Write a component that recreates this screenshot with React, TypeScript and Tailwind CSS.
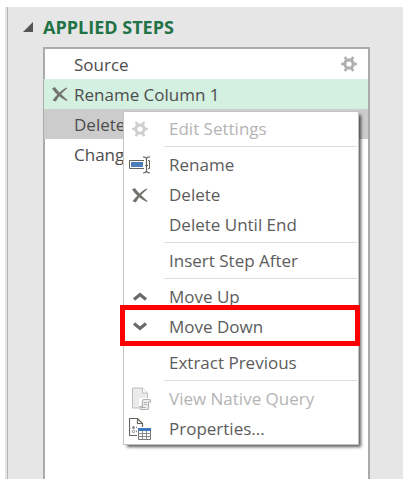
import type { ReactNode } from "react";

function GearIcon() {
  return (
    <svg width="16" height="16" viewBox="0 0 16 16" fill="none" stroke="currentColor" aria-hidden="true">
      <circle cx="8" cy="8" r="4.2" strokeWidth="3.2" />
      <path d="M0 8h4M12 8h4M3.800 .8l2 3.600M12.200 .8l-2 3.600M3.800 15.200l2-3.600M12.200 15.200l-2-3.600" strokeWidth="2.600" />
    </svg>
  );
}

function CrossIcon() {
  return (
    <svg width="16" height="15" viewBox="0 0 16 15" fill="#73736f" aria-hidden="true">
      <path d="M0 1.500 2.800 0C6 4.200 10.500 9 15.500 13l-.8 1C8.500 11 3.500 6.500 0 1.500Z" />
      <path d="M14.400.4l.9.9C11 4.500 7 9 3.800 14.500L.5 13.200C4 8.300 9 3.400 14.400.4Z" />
    </svg>
  );
}

function RenameIcon() {
  return (
    <svg width="22" height="18" viewBox="0 0 22 18" fill="none" stroke="#66665f" aria-hidden="true">
      <path d="M15 4.500H.5v8H15M19 4.500h1.500v8H19" />
      <path d="M2 6h12v5H2z" fill="#4a7ebb" stroke="none" />
      <path d="M14 .8c2 0 3 .6 3.400 1.700C17.800 1.400 19 .8 21 .8M14 17c2 0 3-.6 3.400-1.700.4 1.100 1.600 1.700 3.600 1.700M17.500 2v14M16 9.500h3" strokeWidth="1.200" />
    </svg>
  );
}

function ChevronIcon({ down = false }: { down?: boolean }) {
  return (
    <svg width="14" height="10" viewBox="0 0 14 10" fill="none" stroke="#6a6a6a" strokeWidth="3.200" aria-hidden="true">
      <path d={down ? "M1 1.500l6 5 6-5" : "M1 7.500l6-5 6 5"} />
    </svg>
  );
}

function NativeQueryIcon() {
  return (
    <svg width="22" height="24" viewBox="0 0 22 24" aria-hidden="true">
      <path d="M3.500 1h10l5 5v15h-15z" fill="#ebebeb" stroke="#bdbdbd" />
      <path d="M13.500 1v5h5" fill="#fff" stroke="#bdbdbd" />
      <path d="M10 11h12v13H10z" fill="#fff" />
      <path d="M13.500 19.500v-5.500q0-1.500 1.500-1.500h5q1.500 0 1.500 1.500v1h-2v6q0 1.500-1.500 1.500h-5.500q-1.500 0-1.500-1.500v-1.500z" fill="#f0f0f0" stroke="#b0b0b0" strokeWidth="1.200" />
      <path d="M15 15.500h3M15 17.500h3M12 20.500h5" stroke="#b0b0b0" />
    </svg>
  );
}

function PropertiesIcon() {
  return (
    <svg width="22" height="24" viewBox="0 0 22 24" fill="none" aria-hidden="true">
      <path d="M8 18.500H.5v-17h8l5 5V10M8.500 1.500v5h5" stroke="#66665f" strokeWidth="1.200" />
      <circle cx="4.500" cy="10.500" r="1.500" fill="#8a8a8a" />
      <circle cx="4.500" cy="14.500" r="1.200" stroke="#8a8a8a" />
      <path d="M7 10.500h1M7 14.500h1" stroke="#8a8a8a" strokeWidth="1.500" />
      <path d="M9.500 11.500h12v11h-12z" fill="#fff" stroke="#73736f" />
      <path d="M13.500 14v9M17.500 14v9M9 16.500h13M9 19.500h13" stroke="#8a8a8a" />
      <path d="M9 11h13v3H9z" fill="#3c78bd" />
    </svg>
  );
}

interface StepProps {
  name: string;
  tone?: string;
  leading?: ReactNode;
  trailing?: ReactNode;
}

function Step({ name, tone = "pl-[7px]", leading, trailing }: StepProps) {
  return (
    <li className={`flex h-[30px] items-center pr-[11px] ${tone}`}>
      <span className="flex w-[22px]">{leading}</span>
      <span className="flex-1 pt-[2px]">{name}</span>
      {trailing}
    </li>
  );
}

interface ItemProps {
  label: string;
  icon?: ReactNode;
  disabled?: boolean;
  highlighted?: boolean;
}

function MenuItem({ label, icon, disabled, highlighted }: ItemProps) {
  return (
    <button
      type="button"
      role="menuitem"
      disabled={disabled}
      className="relative flex h-[30px] w-full items-center gap-[18px] pl-[5px] text-left text-[#5c5c5c] disabled:text-[#b4b4b4]"
    >
      <span className="flex w-[22px] justify-center">{icon}</span>
      <span>{label}</span>
      {highlighted && (
        <span className="absolute -top-[7px] -right-[2px] -bottom-1 -left-1 z-10 border-5 border-[#ff0000]" />
      )}
    </button>
  );
}

function Separator() {
  return (
    <div role="separator" className="h-[6px] pt-[2px] pr-px pl-10">
      <div className="h-px bg-[#dcdfe1]" />
    </div>
  );
}

export default function App() {
  return (
    <main className="bg-white pt-[7px] pr-[6px] pb-[9px] pl-[5px] font-['Open_Sans','Noto_Sans',sans-serif] text-[17px] leading-6 text-[#4d4d4d]">
      <section className="bg-[#e6e6e6] pl-[2px]">
        <div className="border-l border-[#b5b5b5] pr-[33px] pl-[35px]">
          <h2 className="-ml-5 h-10 pt-2 text-lg leading-6 font-bold text-[#217346]">
            <button type="button" aria-expanded="true" className="flex items-center gap-[10px]">
              <svg width="10" height="10" viewBox="0 0 10 10" fill="#555" aria-hidden="true">
                <path d="M10 0v10H0z" />
              </svg>
              APPLIED STEPS
            </button>
          </h2>
          <div className="relative min-h-[432px] border-2 border-b-0 border-[#ababab] bg-white">
            <ul>
              <Step name="Source" trailing={<button type="button" aria-label="Source settings" className="text-[#b0b0b0]"><GearIcon /></button>} />
              <Step name="Rename Column 1" tone="-ml-px pl-2 bg-[#d4f0e1]" leading={<button type="button" aria-label="Delete step"><CrossIcon /></button>} />
              <Step name="Delete" tone="-ml-px pl-2 bg-[#cccccc]" />
              <Step name="Change" />
            </ul>
            <div role="menu" className="absolute top-[62px] right-[9px] left-[78px] border border-[#c4c4c4] bg-white pt-[2px] shadow-[3px_3px_3px_-1px_rgba(0,0,0,0.65)]">
              <MenuItem label="Edit Settings" disabled icon={<span className="text-[#cfcfcf]"><GearIcon /></span>} />
              <Separator />
              <MenuItem label="Rename" icon={<RenameIcon />} />
              <MenuItem label="Delete" icon={<CrossIcon />} />
              <MenuItem label="Delete Until End" />
              <Separator />
              <MenuItem label="Insert Step After" />
              <Separator />
              <MenuItem label="Move Up" icon={<ChevronIcon />} />
              <MenuItem label="Move Down" icon={<ChevronIcon down />} highlighted />
              <Separator />
              <MenuItem label="Extract Previous" />
              <Separator />
              <MenuItem label="View Native Query" disabled icon={<NativeQueryIcon />} />
              <MenuItem label="Properties..." icon={<PropertiesIcon />} />
            </div>
          </div>
        </div>
      </section>
    </main>
  );
}
